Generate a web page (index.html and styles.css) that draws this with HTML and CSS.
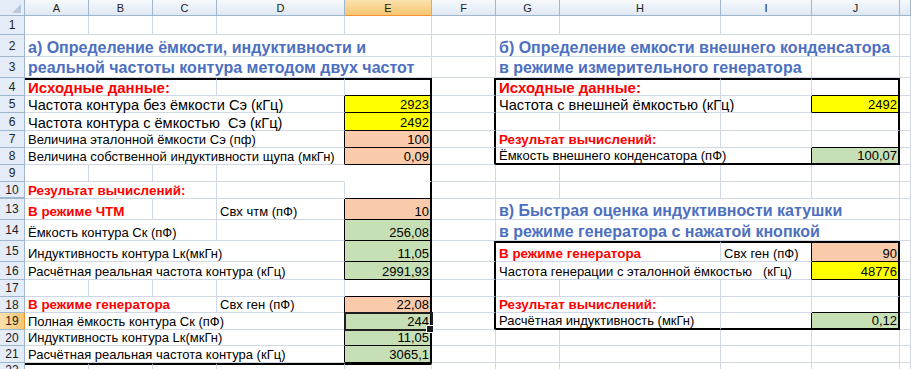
FILE: index.html
```html
<!DOCTYPE html>
<html lang="ru">
<head>
<meta charset="utf-8">
<title>Расчёт контура</title>
<link rel="stylesheet" href="styles.css">
</head>
<body>
<div class="sheet">
  <div class="row hdr">
    <div class="corner"><svg width="24" height="15" viewBox="0 0 24 15"><polygon points="21,4 21,13 12,13" fill="#b6c9df"/></svg></div>
    <div class="ch">A</div><div class="ch">B</div><div class="ch">C</div><div class="ch">D</div><div class="ch sel">E</div><div class="ch">F</div><div class="ch">G</div><div class="ch">H</div><div class="ch">I</div><div class="ch">J</div><div class="ch"></div>
  </div>

  <div class="row h19">
    <div class="rh">1</div>
    <div class="c"></div><div class="c"></div><div class="c"></div><div class="c"></div><div class="c"></div><div class="c"></div><div class="c"></div><div class="c"></div><div class="c"></div><div class="c"></div><div class="c"></div>
  </div>

  <div class="row h22">
    <div class="rh">2</div>
    <div class="c s5 title">а) Определение ёмкости, индуктивности и</div>
    <div class="c"></div>
    <div class="c s4 title">б) Определение емкости внешнего конденсатора</div>
    <div class="c"></div>
  </div>

  <div class="row h21">
    <div class="rh">3</div>
    <div class="c s5 title t3">реальной частоты контура методом двух частот</div>
    <div class="c"></div>
    <div class="c s3 title t3">в режиме измерительного генератора</div>
    <div class="c"></div>
    <div class="c"></div>
  </div>

  <div class="row h18">
    <div class="rh">4</div>
    <div class="c s3 red big tt">Исходные данные:</div>
    <div class="c tt"></div>
    <div class="c tt tr bk"></div>
    <div class="c tr"></div>
    <div class="c s2 red big tt">Исходные данные:</div>
    <div class="c tt"></div>
    <div class="c tt tr bk"></div>
    <div class="c"></div>
  </div>

  <div class="row h17">
    <div class="rh">5</div>
    <div class="c s4 rk big">Частота контура без ёмкости Сэ (кГц)</div>
    <div class="c num y bk tr">2923</div>
    <div class="c tr"></div>
    <div class="c s2 big">Частота с внешней ёмкостью (кГц)</div>
    <div class="c rk"></div>
    <div class="c num y bk tr">2492</div>
    <div class="c"></div>
  </div>

  <div class="row h18">
    <div class="rh">6</div>
    <div class="c s4 rk big">Частота контура с ёмкостью  Сэ (кГц)</div>
    <div class="c num y bk tr">2492</div>
    <div class="c tr"></div>
    <div class="c"></div><div class="c"></div><div class="c"></div>
    <div class="c tr"></div>
    <div class="c"></div>
  </div>

  <div class="row h17">
    <div class="rh">7</div>
    <div class="c s4 rk">Величина эталонной ёмкости Сэ (пф)</div>
    <div class="c num p bk tr">100</div>
    <div class="c tr"></div>
    <div class="c s2 red">Результат вычислений:</div>
    <div class="c"></div>
    <div class="c tr bk"></div>
    <div class="c"></div>
  </div>

  <div class="row h17">
    <div class="rh">8</div>
    <div class="c s4 rk">Величина собственной индуктивности щупа (мкГн)</div>
    <div class="c num p bk tr">0,09</div>
    <div class="c tr"></div>
    <div class="c s3 rk bb">Ёмкость внешнего конденсатора (пФ)</div>
    <div class="c num g tr bb">100,07</div>
    <div class="c"></div>
  </div>

  <div class="row h17">
    <div class="rh">9</div>
    <div class="c"></div><div class="c"></div><div class="c"></div>
    <div class="c nr"></div>
    <div class="c tr nb"></div>
    <div class="c"></div><div class="c"></div><div class="c"></div><div class="c"></div><div class="c"></div><div class="c"></div>
  </div>

  <div class="row h17">
    <div class="rh dbl">10</div>
    <div class="c s3 red">Результат вычислений:</div>
    <div class="c"></div>
    <div class="c tr bk"></div>
    <div class="c"></div><div class="c"></div><div class="c"></div><div class="c"></div><div class="c"></div><div class="c"></div>
  </div>

  <div class="row h21">
    <div class="rh">13</div>
    <div class="c s2 red">В режиме ЧТМ</div>
    <div class="c"></div>
    <div class="c rk">Свх чтм (пФ)</div>
    <div class="c num p bk tr">10</div>
    <div class="c"></div>
    <div class="c s4 title">в) Быстрая оценка индуктивности катушки</div>
    <div class="c"></div>
  </div>

  <div class="row h21">
    <div class="rh">14</div>
    <div class="c s3">Ёмкость контура Ск (пФ)</div>
    <div class="c rk"></div>
    <div class="c num g bk tr">256,08</div>
    <div class="c"></div>
    <div class="c s4 title">в режиме генератора с нажатой кнопкой</div>
    <div class="c"></div>
  </div>

  <div class="row h21">
    <div class="rh">15</div>
    <div class="c s4 rk">Индуктивность контура Lк(мкГн)</div>
    <div class="c num g bk tr">11,05</div>
    <div class="c tr"></div>
    <div class="c s2 red tt">В режиме генератора</div>
    <div class="c tt rk">Свх ген (пФ)</div>
    <div class="c num p bk tr tt">90</div>
    <div class="c"></div>
  </div>

  <div class="row h18">
    <div class="rh">16</div>
    <div class="c s4 rk">Расчётная реальная частота контура (кГц)</div>
    <div class="c num g bk tr">2991,93</div>
    <div class="c tr"></div>
    <div class="c s3 rk">Частота генерации с эталонной ёмкостью   (кГц)</div>
    <div class="c num y bk tr">48776</div>
    <div class="c"></div>
  </div>

  <div class="row h17">
    <div class="rh">17</div>
    <div class="c"></div><div class="c"></div><div class="c"></div><div class="c"></div>
    <div class="c tr bk"></div>
    <div class="c tr"></div>
    <div class="c"></div><div class="c"></div><div class="c"></div>
    <div class="c tr"></div>
    <div class="c"></div>
  </div>

  <div class="row h16">
    <div class="rh">18</div>
    <div class="c s3 red">В режиме генератора</div>
    <div class="c rk">Свх ген (пФ)</div>
    <div class="c num p bk tr">22,08</div>
    <div class="c tr"></div>
    <div class="c s2 red">Результат вычислений:</div>
    <div class="c"></div>
    <div class="c tr bk"></div>
    <div class="c"></div>
  </div>

  <div class="row h17">
    <div class="rh sel">19</div>
    <div class="c s4 rk">Полная ёмкость контура Ск (пФ)</div>
    <div class="c num g bk tr active">244</div>
    <div class="c tr"></div>
    <div class="c s2 bb">Расчётная индуктивность (мкГн)</div>
    <div class="c rk bb"></div>
    <div class="c num g tr bb">0,12</div>
    <div class="c"></div>
  </div>

  <div class="row h16">
    <div class="rh">20</div>
    <div class="c s4 rk">Индуктивность контура Lк(мкГн)</div>
    <div class="c num g bk tr">11,05</div>
    <div class="c"></div><div class="c"></div><div class="c"></div><div class="c"></div><div class="c"></div><div class="c"></div>
  </div>

  <div class="row h17">
    <div class="rh">21</div>
    <div class="c s4 rk">Расчётная реальная частота контура (кГц)</div>
    <div class="c num g bk tr">3065,1</div>
    <div class="c"></div><div class="c"></div><div class="c"></div><div class="c"></div><div class="c"></div><div class="c"></div>
  </div>

  <div class="row last">
    <div class="rh">22</div>
    <div class="c tt"></div><div class="c tt"></div><div class="c tt"></div><div class="c tt"></div><div class="c tt"></div>
    <div class="c"></div><div class="c"></div><div class="c"></div><div class="c"></div><div class="c"></div><div class="c"></div>
  </div>
</div>
</body>
</html>
```

FILE: styles.css
```css
* { box-sizing: border-box; }
html, body { margin: 0; padding: 0; background: #fff; }
body {
  font-family: "Liberation Sans", Arial, sans-serif;
  font-size: 13px;
  color: #000;
  overflow: hidden;
}
.sheet {
  display: flex;
  flex-direction: column;
  width: 911px;
  height: 369px;
  overflow: hidden;
}
.row {
  display: grid;
  grid-template-columns: 25px 64px 64px 64px 128px 87px 64px 64px 161px 91px 88px 1fr;
  flex: none;
}
.hdr { height: 16px; }
.h16 { height: 16px; }
.h17 { height: 17px; }
.h18 { height: 18px; }
.h19 { height: 19px; }
.h21 { height: 21px; }
.h22 { height: 22px; }
.last { flex: 1 1 auto; }

.corner {
  background: #e4ecf7;
  border-right: 1px solid #9eb6ce;
  border-bottom: 1px solid #9eb6ce;
  line-height: 0;
}
.ch {
  background: linear-gradient(#f6f9fc, #e0e8f3);
  border-right: 1px solid #9eb6ce;
  border-bottom: 1px solid #9eb6ce;
  font-size: 11px;
  color: #222;
  display: flex;
  align-items: center;
  justify-content: center;
}
.ch.sel {
  background: linear-gradient(#fbe1ad, #f5c670);
  border-bottom-color: #f29436;
}
.rh {
  background: #e4ecf7;
  border-right: 1px solid #9eb6ce;
  border-bottom: 1px solid #9eb6ce;
  font-size: 12px;
  color: #222;
  display: flex;
  align-items: center;
  justify-content: center;
}
.rh.sel {
  background: linear-gradient(90deg, #fbe1ad, #f5c670);
  border-right-color: #f29436;
}
.rh.dbl { border-bottom-width: 2px; }

.c {
  border-right: 1px solid #d0d7e5;
  border-bottom: 1px solid #d0d7e5;
  display: flex;
  align-items: flex-end;
  padding: 0 1px 0 3px;
  white-space: pre;
  overflow: visible;
  line-height: 14px;
  min-width: 0;
}
.s2 { grid-column: span 2; }
.s3 { grid-column: span 3; }
.s4 { grid-column: span 4; }
.s5 { grid-column: span 5; }

.title {
  font-size: 16px;
  font-weight: bold;
  color: #4d6fbf;
  line-height: 17px;
}
.t3 { padding-bottom: 1px; }
.big { font-size: 14.6px; }
.red { color: #ff0000; font-weight: bold; font-size: 13.4px; }
.red.big { font-size: 15px; }
.num { justify-content: flex-end; }
.y { background: #ffff00; }
.p { background: #f9cbab; }
.g { background: #c6dfb4; }

.rk { border-right-color: #000; }
.bk { border-bottom-color: #000; }
.tr { border-right: 2px solid #000; }
.tt { border-top: 2px solid #000; }
.bb { border-bottom: 2px solid #000; }
.nr { border-right-color: transparent; }
.nb { border-bottom-color: transparent; }

.active {
  position: relative;
  z-index: 2;
  outline: 2px solid #1e1e1e;
  outline-offset: -1px;
}
.active::after {
  content: "";
  position: absolute;
  right: -4px;
  bottom: -4px;
  width: 6px;
  height: 6px;
  background: #1e1e1e;
  border: 1px solid #fff;
}
```
